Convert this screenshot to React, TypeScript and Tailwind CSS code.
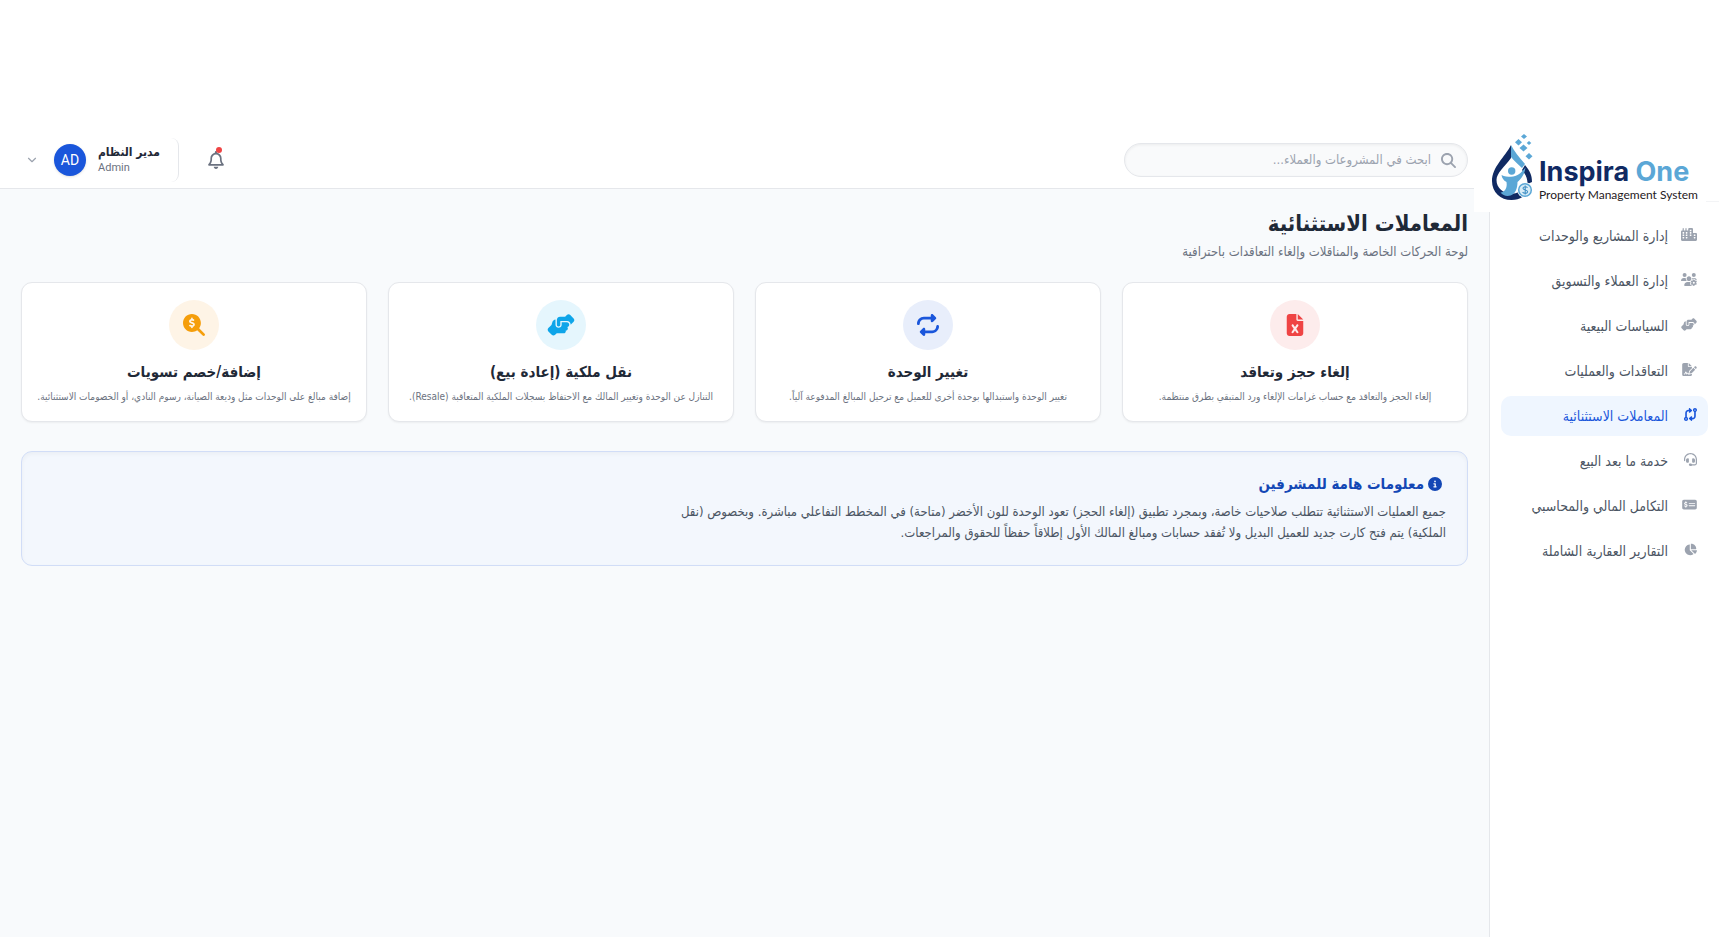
import React, { useState } from 'react';
import {
  FaChartPie,
  FaCircleInfo,
  FaCity,
  FaCodeCompare,
  FaFileExcel,
  FaFileSignature,
  FaHandshakeAngle,
  FaHeadset,
  FaMagnifyingGlass,
  FaMagnifyingGlassDollar,
  FaMoneyCheckDollar,
  FaRegBell,
  FaRepeat,
  FaUsersGear,
} from 'react-icons/fa6';
import { ChevronDown } from 'lucide-react';

const NAV_ITEMS = [
  { id: 'projects', label: 'إدارة المشاريع والوحدات', icon: FaCity, size: 'h-[13px] w-4' },
  { id: 'clients', label: 'إدارة العملاء والتسويق', icon: FaUsersGear, size: 'h-[13px] w-4' },
  { id: 'policies', label: 'السياسات البيعية', icon: FaHandshakeAngle, size: 'h-[13px] w-4' },
  { id: 'contracts', label: 'التعاقدات والعمليات', icon: FaFileSignature, size: 'h-[13px] w-[15px]' },
  { id: 'exceptions', label: 'المعاملات الاستثنائية', icon: FaCodeCompare, size: 'size-[13px]' },
  { id: 'support', label: 'خدمة ما بعد البيع', icon: FaHeadset, size: 'size-[13px]' },
  { id: 'finance', label: 'التكامل المالي والمحاسبي', icon: FaMoneyCheckDollar, size: 'h-[13px] w-[15px]' },
  { id: 'reports', label: 'التقارير العقارية الشاملة', icon: FaChartPie, size: 'size-[13px]' },
];

const ACTIONS = [
  {
    title: 'إلغاء حجز وتعاقد',
    text: 'إلغاء الحجز والتعاقد مع حساب غرامات الإلغاء ورد المتبقي بطرق منتظمة.',
    icon: FaFileExcel,
    tone: 'bg-[#fdecec] text-[#ef4444]',
  },
  {
    title: 'تغيير الوحدة',
    text: 'تغيير الوحدة واستبدالها بوحدة أخرى للعميل مع ترحيل المبالغ المدفوعة آلياً.',
    icon: FaRepeat,
    tone: 'bg-[#e8eefb] text-[#1a56db]',
  },
  {
    title: 'نقل ملكية (إعادة بيع)',
    text: 'التنازل عن الوحدة وتغيير المالك مع الاحتفاظ بسجلات الملكية المتعاقبة (Resale).',
    icon: FaHandshakeAngle,
    tone: 'bg-[#e5f6fd] text-[#0ea5e9]',
  },
  {
    title: 'إضافة/خصم تسويات',
    text: 'إضافة مبالغ على الوحدات مثل وديعة الصيانة، رسوم النادي، أو الخصومات الاستثنائية.',
    icon: FaMagnifyingGlassDollar,
    tone: 'bg-[#fef4e6] text-[#f59e0b]',
  },
];

const LogoMark: React.FC = () => (
  <svg viewBox="0 0 42 67" className="h-[67px] w-[42px] shrink-0" aria-hidden="true">
    {/* Pixels rising from the drop */}
    <g fill="#5ba7d6">
      <path d="M33 0l3 2.500-3 2.500-3-2.500z" />
      <path d="M27.500 5l3.500 3.300-3.500 3.300-3.500-3.300z" />
      <path d="M38 7l2.300 2-2.300 2-2.300-2z" />
      <path d="M32.500 10.500l4 3.500-4 3.500-4-3.500z" />
      <path d="M38 19l3.500 3.200-3.500 3.200-3.500-3.200z" />
    </g>
    {/* Drop outline */}
    <path d="M20 11C14 23 1 33 1 47c0 11.500 8.500 19 19.500 19 4.500 0 8-1 11-3l-4-5c-2 1-4 1.700-6.500 1.700C12 59.700 5.500 54 5.500 46c0-7 8-13 14.500-22z" fill="#102a63" />
    <path d="M20 11c3 6 8 12 14 19l-3 4c-4-4-8-7-11-11z" fill="#5ba7d6" />
    <path d="M34 31c5 6 7 10 7 17l-4.500 2c0-6-1.500-9-5.500-14z" fill="#102a63" />
    {/* Figure */}
    <circle cx="20.700" cy="37" r="3.700" fill="#5ba7d6" />
    <path d="M10.500 41c3 1.500 6 1.700 9.500 1.700 6 0 10-3.500 14.500-9.200-1 7-4 11-8 14.500 0 6-2 12-7 13.500-4 1-7.500 0-10-3 4.500-.5 7-4.500 6-10.500-3-1.500-4.500-4-5-7z" fill="#5ba7d6" />
    {/* Coin */}
    <circle cx="34" cy="56" r="7.800" fill="#fff" />
    <circle cx="34" cy="56" r="6.300" fill="#d8ecf7" stroke="#5ba7d6" strokeWidth="1.500" />
    <path d="M36.500 53.700c-1-1.400-4.500-1.300-4.500.6 0 2.200 4.600 1.200 4.600 3.500 0 2-3.900 2-5 .3M34.200 51.500v9" fill="none" stroke="#3f8fc4" strokeWidth="1.100" />
  </svg>
);

const Logo: React.FC = () => (
  <div dir="ltr" className="absolute top-0 right-[13px] -left-4 flex h-[82px] items-start bg-white pt-1 pl-[17px]">
    <LogoMark />
    <div className="pt-6 pl-[6px] whitespace-nowrap">
      <p className="[font-family:Inter,sans-serif] text-[27px] leading-[28px] font-bold text-[#102a63]">
        Inspira <span className="text-[#5ba7d6]">One</span>
      </p>
      <p className="[font-family:Lato,sans-serif] text-[12px] leading-[18px] text-[#1f2024]">Property Management System</p>
    </div>
  </div>
);

const App: React.FC = () => {
  const [active, setActive] = useState('exceptions');

  return (
    <div dir="rtl" className="flex min-h-screen w-full flex-col bg-white pt-[130px] font-['DejaVu_Sans_Condensed','DejaVu_Sans',sans-serif]">
      <div className="flex flex-1">
        {/* Sidebar */}
        <aside className="relative z-10 w-[230px] shrink-0 border-l border-[#e5e7eb] bg-white">
          <div className="h-[72px] border-b border-[#f3f4f6]">
            <Logo />
          </div>
          <nav className="flex flex-col gap-[5px] px-[11px] pt-[14px]">
            {NAV_ITEMS.map(({ id, label, icon: Icon, size }) => (
              <a
                key={id}
                href={`#${id}`}
                onClick={() => setActive(id)}
                className={`flex h-10 items-center rounded-[10px] px-[11px] text-[14px] whitespace-nowrap ${
                  active === id ? 'bg-[#eff6ff] text-[#1a56db]' : 'text-[#4b5563]'
                }`}
              >
                <span className={`flex w-[29px] shrink-0 pb-1 ${active === id ? 'text-[#1a56db]' : 'text-[#9ca3af]'}`}>
                  <Icon className={size} />
                </span>
                {label}
              </a>
            ))}
          </nav>
        </aside>

        <div className="flex min-w-0 flex-1 flex-col">
          {/* Header */}
          <header className="flex h-[59px] items-center justify-between border-b border-[#e5e7eb] bg-white px-[21px] pt-[2px] shadow-xs">
            <label className="flex h-[34px] w-[344px] items-center gap-[10px] rounded-full border border-[#e5e7eb] bg-[#f9fafb] px-[11px] shadow-[inset_0_1px_3px_rgba(0,0,0,0.06)]">
              <FaMagnifyingGlass className="size-[15px] text-[#9ca3af]" />
              <input
                type="text"
                aria-label="بحث"
                placeholder="ابحث في المشروعات والعملاء..."
                className="min-w-0 flex-1 bg-transparent text-[13px] outline-none placeholder:text-[#9ca3af]"
              />
            </label>

            <div className="flex items-center">
              <button type="button" aria-label="الإشعارات" className="relative ml-7 text-[#6b7280]">
                <FaRegBell className="size-[18px]" />
                <span className="absolute -top-1 right-[3px] size-[6px] rounded-full bg-[#ef4444]" />
              </button>
              <button type="button" className="flex h-11 items-center rounded-lg border-r border-[#e5e7eb] pr-[18px] pl-1">
                <span className="w-[62px] text-left whitespace-nowrap">
                  <span className="block text-[12px] leading-4 font-bold text-[#1f2937]">مدير النظام</span>
                  <span className="block [font-family:Roboto,sans-serif] text-[11px] leading-4 text-[#6b7280]">Admin</span>
                </span>
                <span className="mr-3 flex size-8 items-center justify-center rounded-full bg-[#1a56db] [font-family:Roboto,sans-serif] text-[14px] text-white shadow-sm">
                  AD
                </span>
                <ChevronDown size={14} className="mr-[15px] text-[#9ca3af]" />
              </button>
            </div>
          </header>

          {/* Content */}
          <main className="flex-1 bg-[#f8fafc] px-[21px] pt-[20px]">
            <h1 className="text-[22px] leading-[30px] font-bold text-[#1f2937]">المعاملات الاستثنائية</h1>
            <p className="mt-[3px] text-[13px] leading-5 text-[#6b7280]">لوحة الحركات الخاصة والمناقلات وإلغاء التعاقدات باحترافية</p>

            <div className="mt-[20px] grid grid-cols-4 gap-[21px]">
              {ACTIONS.map(({ title, text, icon: Icon, tone }) => (
                <button
                  key={title}
                  type="button"
                  className="flex h-[140px] flex-col items-center rounded-[11px] border border-[#e5e7eb] bg-white pt-[17px] shadow-xs"
                >
                  <span className={`flex size-[50px] items-center justify-center rounded-full ${tone}`}>
                    <Icon className="h-[22px] w-7" />
                  </span>
                  <span className="mt-[10px] text-[15px] leading-6 font-bold text-[#1f2937]">{title}</span>
                  <span className="mt-[5px] text-[10px] leading-4 whitespace-nowrap text-[#6b7280]">{text}</span>
                </button>
              ))}
            </div>

            <section className="mt-[29px] h-[115px] rounded-[11px] border border-[#d1ddf7] bg-[#f3f7fd] px-[21px] pt-[20px] shadow-[inset_0_2px_4px_rgba(0,0,0,0.04)]">
              <h2 className="flex items-center gap-1 pr-1 text-[15px] leading-6 font-bold text-[#1347b5]">
                <FaCircleInfo className="size-[14px]" />
                معلومات هامة للمشرفين
              </h2>
              <p className="mt-[5px] text-[13px] leading-[21px] text-[#4b5563]">
                جميع العمليات الاستثنائية تتطلب صلاحيات خاصة، وبمجرد تطبيق (إلغاء الحجز) تعود الوحدة للون الأخضر (متاحة) في المخطط التفاعلي مباشرة. وبخصوص (نقل
                <br />
                الملكية) يتم فتح كارت جديد للعميل البديل ولا تُفقد حسابات ومبالغ المالك الأول إطلاقاً حفظاً للحقوق والمراجعات.
              </p>
            </section>
          </main>
        </div>
      </div>
    </div>
  );
};

export default App;
